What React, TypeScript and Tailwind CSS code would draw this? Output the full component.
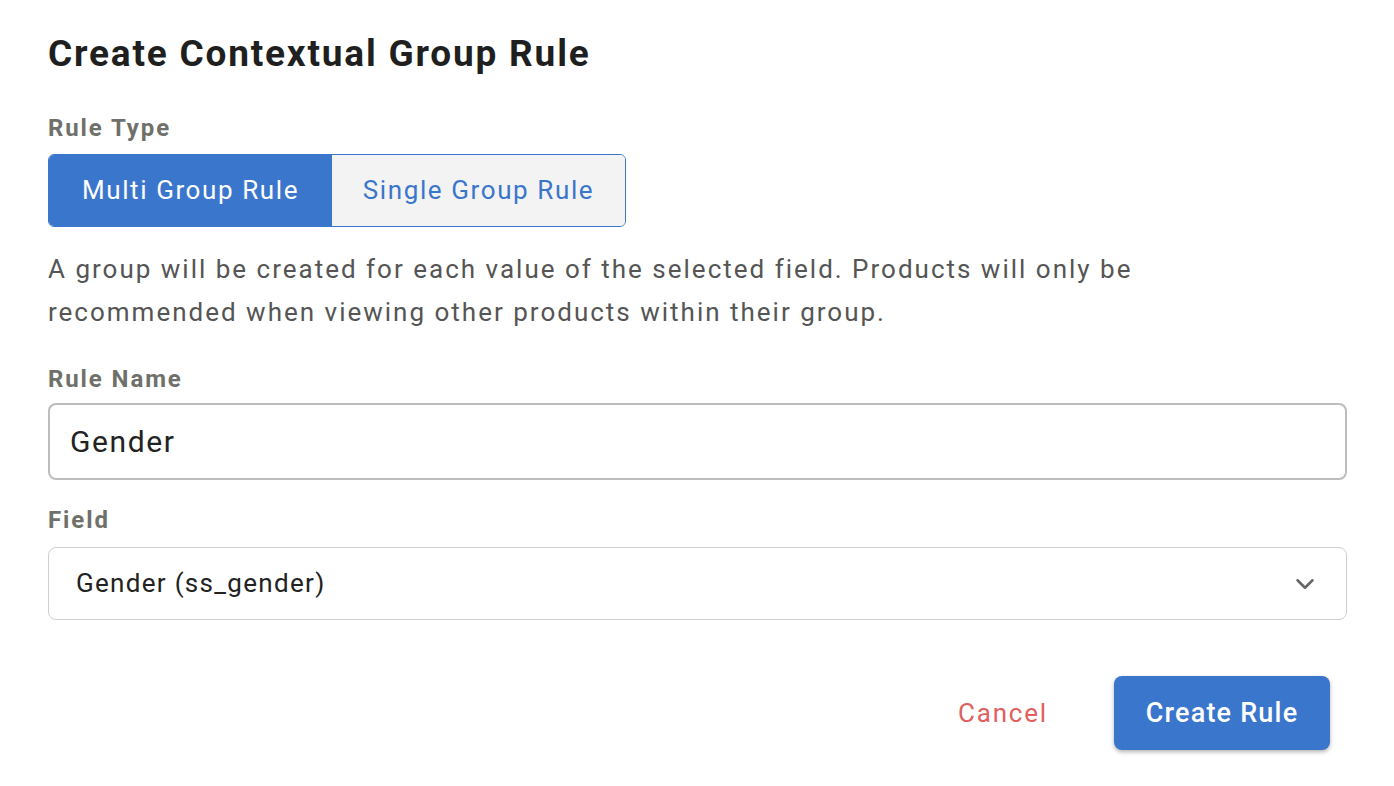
import { ChevronDown } from 'lucide-react';

export default function App() {
  return (
    <div className="w-[1394px] h-[786px] bg-white font-['Roboto',sans-serif] overflow-hidden">
      <div className="pl-[48px] pr-[47px] pt-[30px] flex flex-col">
        <h1 className="text-[37px] font-bold tracking-[1.8px] text-[#1f1f1f] leading-[48px]">Create Contextual Group Rule</h1>

        <label className="mt-[34px] text-[24px] font-bold tracking-[1.9px] text-[#70706b] leading-[32px]">Rule Type</label>
        <div className="mt-[10px] flex w-[578px] h-[73px] rounded-[6px] border-[1.5px] border-[#3a76cc] overflow-hidden">
          <button className="w-[283px] bg-[#3a76cc] text-white text-[26px] tracking-[1.6px]">Multi Group Rule</button>
          <button className="flex-1 bg-[#f3f3f3] text-[#3a76cc] text-[26px] tracking-[1.6px]">Single Group Rule</button>
        </div>

        <p className="mt-[21px] text-[26px] tracking-[2px] leading-[43px] text-[#555555] max-w-[1120px]">
          A group will be created for each value of the selected field. Products will only be recommended when viewing other products within their group.
        </p>

        <label className="mt-[29px] text-[24px] font-bold tracking-[1.9px] text-[#70706b] leading-[32px]">Rule Name</label>
        <div className="mt-[8px] h-[77px] rounded-[8px] border-[2px] border-[#bdbdbd] flex items-center pl-[20px] text-[30px] tracking-[1.6px] text-[#222222]">
          Gender
        </div>

        <label className="mt-[24px] text-[24px] font-bold tracking-[1.9px] text-[#70706b] leading-[32px]">Field</label>
        <div className="mt-[11px] h-[73px] rounded-[8px] border-[1.5px] border-[#cfcfcf] flex items-center pl-[27px] pr-[26px] text-[26px] tracking-[1.3px] text-[#222222]">
          <span className="flex-1">Gender (ss_gender)</span>
          <ChevronDown size={30} strokeWidth={2} className="text-[#666666]" />
        </div>

        <div className="mt-[56px] flex justify-end items-center pr-[17px] gap-[66px]">
          <button className="text-[26px] tracking-[1.8px] text-[#e06060]">Cancel</button>
          <button className="w-[216px] h-[74px] rounded-[8px] bg-[#3a76cc] text-white text-[27px] font-medium tracking-[1.2px] shadow-[0_2px_4px_rgba(0,0,0,0.3)]">Create Rule</button>
        </div>
      </div>
    </div>
  );
}
